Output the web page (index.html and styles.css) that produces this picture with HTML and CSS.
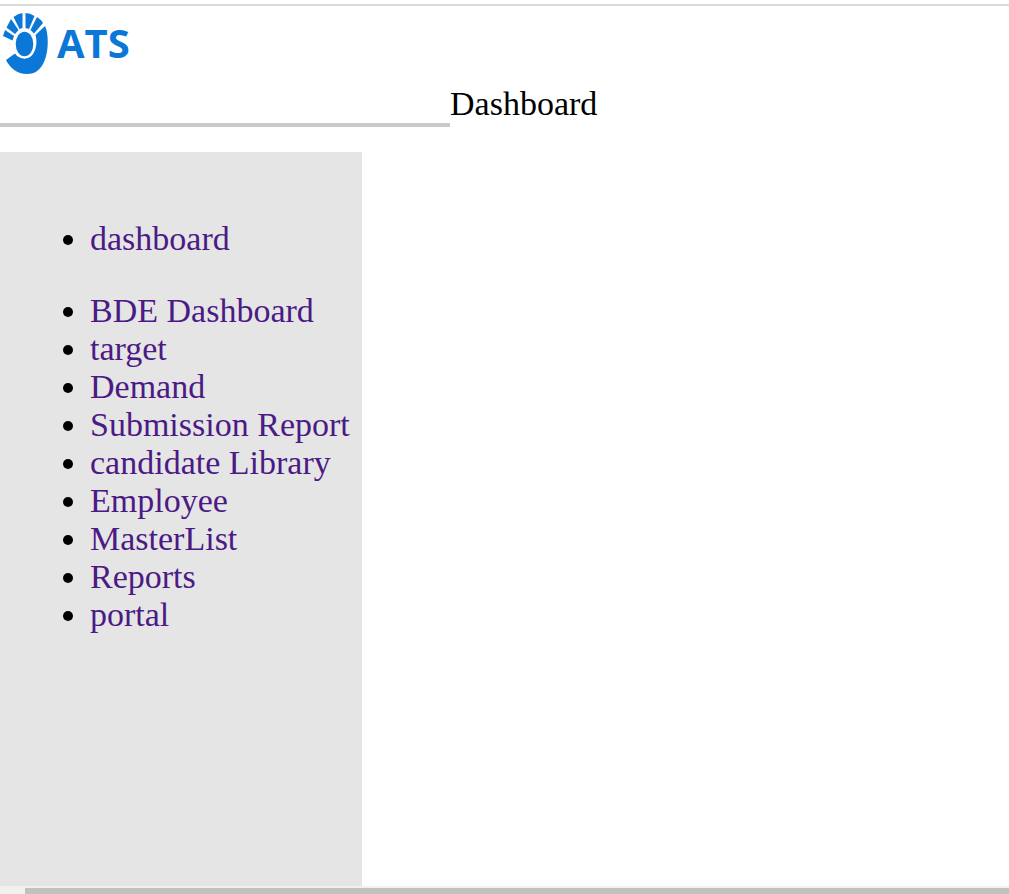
FILE: index.html
```
<!DOCTYPE html>
<html lang="en">
<head>
<meta charset="utf-8">
<title>Dashboard</title>
<link rel="stylesheet" href="styles.css">
</head>
<body>
<header class="header">
  <div class="brand">
    <svg class="brand-mark" viewBox="0 0 46 62" aria-hidden="true">
      <path d="M2 18 L11 24 L9.500 28.500 L0 24 Z"/>
      <path d="M8 7 L15.500 18 L12 22 L3.500 15.500 Z"/>
      <path d="M19.500 1 V16 L16.500 17 L10.500 5 Q15 1.500 19.500 1 Z"/>
      <path d="M22.500 1 Q27 1.200 31.500 4 L26 17 L22.500 16 Z"/>
      <path d="M34 5 Q37.500 7 40 11 L31 21.500 L27.500 18 Z"/>
      <path d="M42 14 C46 22 46 42 40 52 C36 59 31 62 24 62 C14 62 7 56 3 48 L12 41.500 C16 48 26 48.500 30 42 C34 36 34 28 32.500 23 Z"/>
      <ellipse cx="21.500" cy="32" rx="8.800" ry="12.200"/>
    </svg>
    <span class="brand-name">ATS</span>
  </div>
  <div class="title-row">
    <div class="rule"></div>
    <h1 class="title">Dashboard</h1>
  </div>
</header>
<nav class="sidebar">
  <ul class="menu">
    <li class="menu-first"><a href="#">dashboard</a></li>
    <li><a href="#">BDE Dashboard</a></li>
    <li><a href="#">target</a></li>
    <li><a href="#">Demand</a></li>
    <li><a href="#">Submission Report</a></li>
    <li><a href="#">candidate Library</a></li>
    <li><a href="#">Employee</a></li>
    <li><a href="#">MasterList</a></li>
    <li><a href="#">Reports</a></li>
    <li><a href="#">portal</a></li>
  </ul>
</nav>
<div class="scrollbar"><div class="thumb"></div></div>
</body>
</html>
```
FILE: styles.css
```
* { box-sizing: border-box; }
body {
  margin: 0;
  min-height: 100vh;
  display: flex;
  flex-direction: column;
  background: #fff;
  color: #000;
  font: 34px/38px "Liberation Serif", "Times New Roman", serif;
}
.header { padding-top: 4px; }
.brand {
  display: flex;
  align-items: center;
  gap: 8px;
  height: 76px;
  padding: 0 3px;
  border-top: 2px solid #dadada;
}
.brand-mark {
  width: 46px;
  height: 62px;
  fill: #0b78d8;
}
.brand-name {
  color: #0b78d8;
  font: bold 40px/50px "Open Sans", sans-serif;
}
.title-row {
  display: flex;
  align-items: flex-end;
  height: 47px;
}
.rule {
  flex: 0 1 450px;
  height: 4px;
  background: #cacaca;
}
.title {
  margin: 0 0 4px;
  font-size: 34px;
  font-weight: normal;
}
.sidebar {
  flex: 1;
  align-self: flex-start;
  margin-top: 25px;
  padding: 68px 12px 34px 0;
  background: #e5e5e5;
}
.menu { margin: 0; padding: 0 0 0 90px; }
.menu-first { margin-bottom: 34px; }
.menu a { color: #4b1a85; text-decoration: none; }
.scrollbar {
  height: 8px;
  padding: 2px 0 0 25px;
  background: #f1f1f1;
}
.thumb { height: 6px; background: #c1c1c1; }
```
